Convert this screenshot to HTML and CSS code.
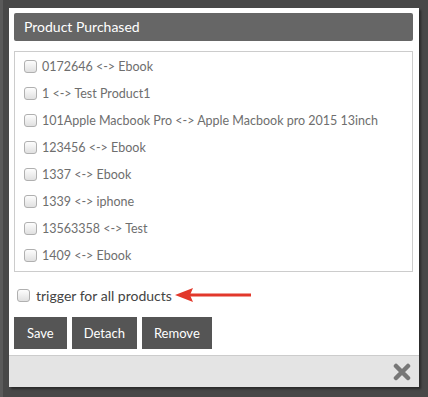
FILE: index.html
```html
<!DOCTYPE html>
<html>
	<head>
		<meta charset="UTF-8">
		<title>Product Purchased</title>
		<link rel="stylesheet" href="styles.css">
	</head>
	<body>
		<div class="dialog">
			<div class="dialog-body">
				<div class="title">Product Purchased</div>
				<ul class="product-list">
					<li><label><input type="checkbox"> 0172646 &lt;-&gt; Ebook</label></li>
					<li><label><input type="checkbox"> 1 &lt;-&gt; Test Product1</label></li>
					<li><label><input type="checkbox"> 101Apple Macbook Pro &lt;-&gt; Apple Macbook pro 2015 13inch</label></li>
					<li><label><input type="checkbox"> 123456 &lt;-&gt; Ebook</label></li>
					<li><label><input type="checkbox"> 1337 &lt;-&gt; Ebook</label></li>
					<li><label><input type="checkbox"> 1339 &lt;-&gt; iphone</label></li>
					<li><label><input type="checkbox"> 13563358 &lt;-&gt; Test</label></li>
					<li><label><input type="checkbox"> 1409 &lt;-&gt; Ebook</label></li>
				</ul>
				<div class="trigger">
					<label><input type="checkbox"> trigger for all products</label>
					<svg class="arrow" width="76" height="14" viewBox="0 0 76 14">
						<polygon points="0,7 18,0 15,7 18,14" fill="#e2382b"/>
						<rect x="14" y="5.5" width="62" height="3" fill="#e2382b"/>
					</svg>
				</div>
				<div class="buttons">
					<button class="btn">Save</button>
					<button class="btn">Detach</button>
					<button class="btn">Remove</button>
				</div>
			</div>
			<div class="dialog-footer">
				<svg class="close" width="18" height="18" viewBox="0 0 18 18">
					<path d="M3 3 L15 15 M15 3 L3 15" stroke="#777" stroke-width="4.5" stroke-linecap="round"/>
				</svg>
			</div>
		</div>
	</body>
</html>
```

FILE: styles.css
```css
*{
	padding: 0;
	margin: 0;
	box-sizing: border-box;
}
html,body{
	width: 100%;
	height: 100%;
	overflow: hidden;
}
body{
	background-color: #484848;
	border-left: 3px solid #5a5a5a;
	padding: 8px 0 0 6px;
	font-family: Lato, "Open Sans", sans-serif;
}
.dialog{
	width: 410px;
	height: 379px;
	background-color: #fff;
	box-shadow: 2px 2px 2px #2a2a2a;
	display: flex;
	flex-direction: column;
}
.dialog-body{
	flex: 1;
	padding: 5px 6px 0 5px;
}
.title{
	height: 28px;
	line-height: 28px;
	background-color: #666;
	color: #fff;
	font-size: 14px;
	padding-left: 10px;
	border-radius: 2px;
	margin-bottom: 10px;
}
.product-list{
	list-style: none;
	border: 1px solid #ccc;
	height: 221px;
	padding: 1px 0 0 9px;
}
.product-list li{
	height: 27px;
	display: flex;
	align-items: center;
	font-size: 12.5px;
	color: #6e6e6e;
}
.product-list label, .trigger label{
	display: flex;
	align-items: center;
}
input[type=checkbox]{
	appearance: none;
	-webkit-appearance: none;
	width: 13px;
	height: 13px;
	border: 1px solid #b0b0b0;
	border-radius: 3px;
	background: linear-gradient(#fdfdfd, #e0e0e0);
	margin-right: 5px;
}
.trigger{
	height: 26px;
	margin: 10px 0 9px;
	padding-left: 3px;
	display: flex;
	align-items: center;
	font-size: 14px;
	color: #444;
}
.trigger input{
	margin-right: 6px;
}
.arrow{
	margin-left: 3px;
}
.buttons{
	display: flex;
	gap: 5px;
}
.btn{
	height: 32px;
	padding: 0 12px;
	border: none;
	background-color: #555;
	color: #fff;
	font-family: Lato, "Open Sans", sans-serif;
	font-size: 13px;
}
.btn:first-child{
	padding: 0 13px;
}
.dialog-footer{
	height: 32px;
	border-top: 1px solid #ccc;
	background-color: #e4e4e4;
	display: flex;
	justify-content: flex-end;
	align-items: center;
	padding-right: 8px;
}
```
